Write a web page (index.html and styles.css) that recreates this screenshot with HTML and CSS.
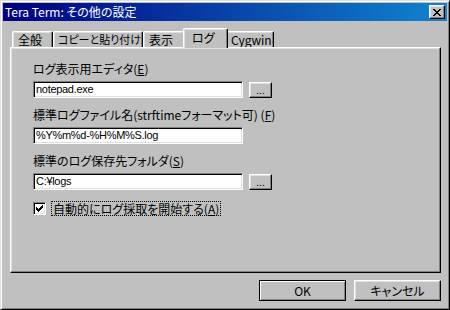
FILE: index.html
```html
<!DOCTYPE html>
<html lang="ja">

<head>
  <meta charset="UTF-8">
  <title>Tera Term: その他の設定</title>
  <link rel="stylesheet" href="styles.css">
</head>

<body>
  <div class="window">
    <div class="titlebar">
      <span class="title">Tera Term: その他の設定</span>
      <button class="close">
        <svg width="8" height="7" viewBox="0 0 8 7" shape-rendering="crispEdges">
          <path d="M0 0h2v1h-2zM6 0h2v1h-2zM1 1h2v1h-2zM5 1h2v1h-2zM2 2h4v1h-4zM3 3h2v1h-2zM2 4h4v1h-4zM1 5h2v1h-2zM5 5h2v1h-2zM0 6h2v1h-2zM6 6h2v1h-2z" fill="#000"/>
        </svg>
      </button>
    </div>

    <div class="body">
      <div class="tabs">
        <div class="tab tab-general">全般</div>
        <div class="tab tab-copy">コピーと貼り付け</div>
        <div class="tab tab-view">表示</div>
        <div class="tab tab-log active">ログ</div>
        <div class="tab tab-cygwin">Cygwin</div>
      </div>

      <div class="panel">
        <div class="field">
          <div class="label">ログ表示用エディタ(<u>E</u>)</div>
          <div class="row">
            <div class="input">notepad.exe</div>
            <button class="browse">...</button>
          </div>
        </div>

        <div class="field">
          <div class="label">標準ログファイル名(strftimeフォーマット可) (<u>F</u>)</div>
          <div class="row">
            <div class="input">%Y%m%d-%H%M%S.log</div>
          </div>
        </div>

        <div class="field">
          <div class="label">標準のログ保存先フォルダ(<u>S</u>)</div>
          <div class="row">
            <div class="input">C:¥logs</div>
            <button class="browse">...</button>
          </div>
        </div>

        <div class="check">
          <span class="box">
            <svg width="7" height="7" viewBox="0 0 7 7" shape-rendering="crispEdges">
              <path d="M6 0h1v3h-1zM5 1h1v3h-1zM4 2h1v3h-1zM3 3h1v3h-1zM2 4h1v3h-1zM1 3h1v3h-1zM0 2h1v3h-1z" fill="#000"/>
            </svg>
          </span>
          <span class="check-label">自動的にログ採取を開始する(<u>A</u>)</span>
        </div>
      </div>

      <div class="actions">
        <button class="btn default">OK</button>
        <button class="btn">キャンセル</button>
      </div>
    </div>
  </div>
</body>

</html>
```

FILE: styles.css
```css
* {
  margin: 0;
  padding: 0;
  box-sizing: border-box;
}

body {
  width: 450px;
  height: 310px;
  overflow: hidden;
  background: #c0c0c0;
  color: #000;
  font-family: "Noto Sans CJK JP", sans-serif;
  font-size: 12px;
  font-feature-settings: "palt";
}

button {
  font: inherit;
  color: inherit;
  background: #c0c0c0;
  border: none;
}

.window {
  width: 450px;
  height: 310px;
  display: flex;
  flex-direction: column;
  padding: 2px;
  background: #c0c0c0;
  border: 1px solid;
  border-color: #dfdfdf #000 #000 #dfdfdf;
  box-shadow: inset 1px 1px #fff, inset -1px -1px #808080;
}

/* title bar */
.titlebar {
  height: 18px;
  flex: 0 0 18px;
  display: flex;
  align-items: center;
  justify-content: space-between;
  padding: 0 2px 0 2px;
  background: linear-gradient(90deg, #000080, #1084d0);
  color: #fff;
  line-height: 18px;
}

.close {
  width: 16px;
  height: 14px;
  display: flex;
  justify-content: center;
  align-items: center;
  border: 1px solid;
  border-color: #fff #000 #000 #fff;
  box-shadow: inset -1px -1px #808080, inset 1px 1px #dfdfdf;
}

/* content */
.body {
  flex: 1;
  display: flex;
  flex-direction: column;
  padding: 7px 6px 6px 7px;
}

.tabs {
  height: 19px;
  flex: 0 0 19px;
  display: flex;
  align-items: flex-end;
  padding-left: 2px;
}

.tab {
  height: 16px;
  flex-shrink: 0;
  padding-left: 5px;
  line-height: 15px;
  border-top: 1px solid #fff;
  border-left: 1px solid #fff;
  border-right: 1px solid #000;
  border-radius: 2px 2px 0 0;
  box-shadow: inset -1px 0 #808080, inset 1px 1px #dfdfdf;
  white-space: nowrap;
  overflow: hidden;
}

.tab-general { width: 41px; }
.tab-copy { width: 90px; padding-left: 4px; font-size: 11px; }
.tab-view { width: 42px; }
.tab-log { width: 41px; }
.tab-cygwin { width: 48px; padding-left: 4px; }

.tab.active {
  position: relative;
  z-index: 1;
  width: 45px;
  height: 20px;
  margin: 0 -2px -1px;
  padding-left: 8px;
  line-height: 17px;
  background: #c0c0c0;
}

.panel {
  flex: 1;
  display: flex;
  flex-direction: column;
  gap: 9px;
  padding: 13px 0 0 22px;
  border: 1px solid;
  border-color: #fff #000 #000 #fff;
  box-shadow: inset -1px -1px #808080, inset 1px 1px #dfdfdf;
}

.field {
  display: flex;
  flex-direction: column;
  gap: 5px;
}

.label {
  line-height: 15px;
  white-space: nowrap;
}

.row {
  display: flex;
  align-items: center;
  gap: 6px;
}

.input {
  width: 210px;
  height: 17px;
  padding: 0 2px;
  font-family: "Liberation Sans", "Noto Sans CJK JP", sans-serif;
  font-size: 11px;
  letter-spacing: -0.3px;
  line-height: 15px;
  background: #fff;
  border: 1px solid;
  border-color: #808080 #fff #fff #808080;
  box-shadow: inset 1px 1px #000, inset -1px -1px #dfdfdf;
}

.browse {
  width: 23px;
  height: 16px;
  font-size: 10px;
  line-height: 12px;
  border: 1px solid;
  border-color: #fff #000 #000 #fff;
  box-shadow: inset -1px -1px #808080, inset 1px 1px #dfdfdf;
}

.check {
  display: flex;
  align-items: center;
  gap: 5px;
  margin-top: 2px;
}

.box {
  width: 13px;
  height: 13px;
  display: flex;
  justify-content: center;
  align-items: center;
  background: #fff;
  border: 1px solid;
  border-color: #808080 #fff #fff #808080;
  box-shadow: inset 1px 1px #000, inset -1px -1px #dfdfdf;
}

.check-label {
  height: 15px;
  padding: 0 1px;
  line-height: 13px;
  border: 1px dotted #000;
  white-space: nowrap;
}

/* buttons */
.actions {
  flex: 0 0 21px;
  display: flex;
  justify-content: flex-end;
  gap: 8px;
  margin-top: 7px;
}

.btn {
  width: 87px;
  height: 21px;
  line-height: 17px;
  border: 1px solid;
  border-color: #fff #000 #000 #fff;
  box-shadow: inset -1px -1px #808080, inset 1px 1px #dfdfdf;
}

.btn.default {
  border-color: #000;
  box-shadow: inset 1px 1px #fff, inset -1px -1px #808080;
}
```
